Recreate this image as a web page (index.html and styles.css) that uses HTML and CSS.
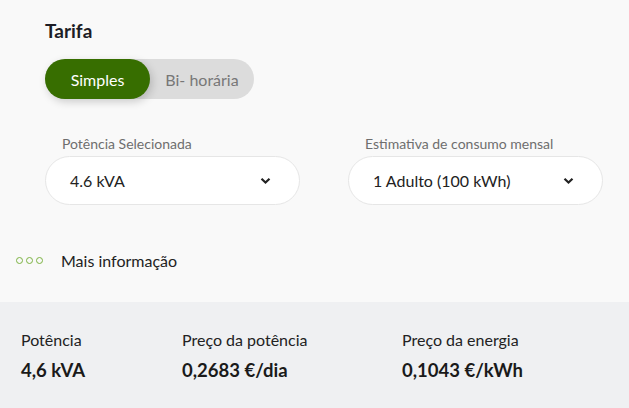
FILE: index.html
```html
<!DOCTYPE html>
<html lang="pt">
<head>
<meta charset="utf-8">
<link rel="stylesheet" href="styles.css">
</head>
<body>
<div class="page">
  <section class="top">
    <h2 class="title">Tarifa</h2>
    <div class="toggle">
      <button class="opt active">Simples</button>
      <button class="opt">Bi- horária</button>
    </div>
    <div class="selects">
      <div class="field">
        <label class="label">Potência Selecionada</label>
        <div class="select">
          <span>4.6 kVA</span>
          <svg class="chev" width="11" height="8" viewBox="0 0 11 8"><path d="M1.5 1.8 L5.5 5.6 L9.5 1.8" fill="none" stroke="#222" stroke-width="2.2"/></svg>
        </div>
      </div>
      <div class="field">
        <label class="label">Estimativa de consumo mensal</label>
        <div class="select">
          <span>1 Adulto (100 kWh)</span>
          <svg class="chev" width="11" height="8" viewBox="0 0 11 8"><path d="M1.5 1.8 L5.5 5.6 L9.5 1.8" fill="none" stroke="#222" stroke-width="2.2"/></svg>
        </div>
      </div>
    </div>
    <div class="more">
      <span class="dots"><i></i><i></i><i></i></span>
      <span class="more-text">Mais informação</span>
    </div>
  </section>
  <section class="summary">
    <div class="col c1"><div class="k">Potência</div><div class="v">4,6 kVA</div></div>
    <div class="col c2"><div class="k">Preço da potência</div><div class="v">0,2683 €/dia</div></div>
    <div class="col c3"><div class="k">Preço da energia</div><div class="v">0,1043 €/kWh</div></div>
  </section>
</div>
</body>
</html>
```
FILE: styles.css
```css
* { box-sizing: border-box; }
html, body { margin: 0; padding: 0; }
body {
  background: #f9f9f9;
  font-family: Lato, "Liberation Sans", sans-serif;
  color: #222;
  width: 629px;
  height: 408px;
  overflow: hidden;
}
.top {
  height: 302px;
  padding: 18px 0 0 45px;
}
.title {
  margin: 0;
  font-size: 19px;
  font-weight: 700;
  line-height: 25px;
  color: #1d1d26;
}
.toggle {
  margin-top: 16px;
  display: flex;
  width: 209px;
  height: 40px;
  border-radius: 20px;
  background: #dcdcdc;
}
.opt {
  border: 0;
  background: transparent;
  font-family: inherit;
  font-size: 16px;
  color: #777;
  padding: 0;
  height: 40px;
  cursor: pointer;
}
.opt.active {
  width: 105px;
  background: #376e00;
  color: #fff;
  border-radius: 20px;
  box-shadow: 2px 3px 8px rgba(0,0,0,0.18);
}
.opt:not(.active) { flex: 1; }
.selects {
  display: flex;
  gap: 48px;
  margin-top: 36px;
}
.field { width: 255px; }
.label {
  display: block;
  padding-left: 17px;
  font-size: 14px;
  line-height: 18px;
  color: #6e6e6e;
  margin-bottom: 3px;
}
.select {
  height: 49px;
  background: #fff;
  border: 1px solid #e6e6e6;
  border-radius: 25px;
  display: flex;
  align-items: center;
  justify-content: space-between;
  padding: 0 28px 0 24px;
  font-size: 16px;
  color: #222;
}
.chev { display: block; margin-top: 1px; }
.more {
  display: flex;
  align-items: center;
  margin: 43px 0 0 -29px;
  height: 24px;
}
.dots { display: flex; gap: 3px; width: 45px; }
.dots i {
  width: 7px;
  height: 7px;
  border: 1.5px solid #7cb342;
  border-radius: 50%;
}
.more-text { font-size: 16px; color: #222; }
.summary {
  height: 106px;
  background: #eff0f2;
  display: flex;
  padding: 28px 0 0 21px;
}
.col .k { font-size: 16px; line-height: 20px; color: #222; }
.col .v { font-size: 18.5px; font-weight: 700; line-height: 24px; margin-top: 8px; color: #1a1a1a; }
.c1 { width: 161px; }
.c2 { width: 220px; }
```
